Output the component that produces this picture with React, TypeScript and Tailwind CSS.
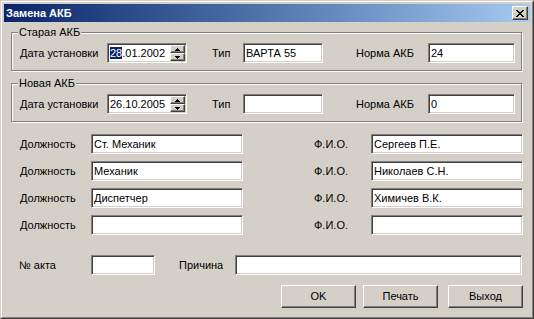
import type { ReactNode } from "react";

const sunken =
    "box-border flex h-[20px] items-center whitespace-nowrap border border-t-[#808080] border-l-[#808080] border-r-white border-b-white bg-white pl-[2px] shadow-[inset_1px_1px_0_#404040,inset_-1px_-1px_0_#d4d0c8]";

const raised =
    "box-border border border-t-white border-l-white border-r-[#404040] border-b-[#404040] bg-[#d4d0c8] shadow-[inset_-1px_-1px_0_#808080]";

type FieldProps = {
    width: string;
    children?: ReactNode;
};

const Field = ({ width, children }: FieldProps) => <div className={`${sunken} ${width}`}>{children}</div>;

const Label = ({ width, children }: FieldProps) => <div className={`${width} shrink-0 whitespace-nowrap`}>{children}</div>;

const Arrow = ({ up }: { up?: boolean }) => (
    <svg width="5" height="3" viewBox="0 0 5 3">
        <path d={up ? "M2 0h1v1h1v1h1v1H0V2h1V1h1z" : "M0 0h5v1H4v1H3v1H2V2H1V1H0z"} fill="#000" />
    </svg>
);

const DateField = ({ value, selected }: { value: string; selected?: boolean }) => (
    <div className={`${sunken} w-[80px] justify-between pr-[1px]`}>
        <span>
            {selected ? (
                <>
                    <span className="bg-[#0a246a] text-white">{value.slice(0, 2)}</span>
                    {value.slice(2)}
                </>
            ) : (
                value
            )}
        </span>
        <div className="flex h-[16px] w-[15px] flex-col">
            <div className={`${raised} flex h-[8px] items-center justify-center`}>
                <Arrow up />
            </div>
            <div className={`${raised} flex h-[8px] items-center justify-center`}>
                <Arrow />
            </div>
        </div>
    </div>
);

type GroupProps = {
    title: string;
    date: string;
    selected?: boolean;
    type: string;
    norm: string;
    className?: string;
};

const Group = ({ title, date, selected, type, norm, className }: GroupProps) => (
    <div
        className={`relative ml-[7px] box-border h-[39px] w-[511px] border border-[#808080] pl-[8px] pt-[10px] shadow-[inset_1px_1px_0_#fff,1px_1px_0_#fff] ${className ?? ""}`}
    >
        <span className="absolute left-[6px] top-[-7px] bg-[#d4d0c8] px-[1px] leading-[13px]">{title}</span>
        <div className="flex items-center">
            <Label width="w-[87px]">Дата установки</Label>
            <DateField value={date} selected={selected} />
            <div className="w-[25px]" />
            <Label width="w-[31px]">Тип</Label>
            <Field width="w-[80px]">{type}</Field>
            <div className="w-[33px]" />
            <Label width="w-[72px]">Норма АКБ</Label>
            <Field width="w-[87px]">{norm}</Field>
        </div>
    </div>
);

const people = [
    { post: "Ст. Механик", name: "Сергеев П.Е." },
    { post: "Механик", name: "Николаев С.Н." },
    { post: "Диспетчер", name: "Химичев В.К." },
    { post: "", name: "" },
];

const Button = ({ width, children }: FieldProps) => (
    <div className={`${raised} flex h-[23px] items-center justify-center ${width}`}>{children}</div>
);

export default function App() {
    return (
        <div
            className="box-border h-[319px] w-[534px] border border-t-[#d4d0c8] border-l-[#d4d0c8] border-r-[#404040] border-b-[#404040] bg-[#d4d0c8] text-[11px] text-black"
            style={{ fontFamily: '"Liberation Sans", Arial, sans-serif' }}
        >
            <div className="box-border flex h-full flex-col border border-t-white border-l-white border-r-[#808080] border-b-[#808080] p-[2px]">
                <div className="flex h-[18px] shrink-0 items-center justify-between bg-linear-to-r from-[#0a246a] to-[#a6caf0] pl-[2px] pr-[2px]">
                    <span className="font-bold text-white">Замена АКБ</span>
                    <div className={`${raised} flex h-[14px] w-[16px] items-center justify-center`}>
                        <svg width="8" height="7" viewBox="0 0 8 7">
                            <path
                                d="M0 0h2v1h1v1h2V1h1V0h2v1H7v1H6v1H5v1h1v1h1v1h1v1H6V6H5V5H3v1H2v1H0V6h1V5h1V4h1V3H2V2H1V1H0z"
                                fill="#000"
                            />
                        </svg>
                    </div>
                </div>

                <div className="flex flex-1 flex-col">
                    <Group title="Старая АКБ" date="28.01.2002" selected type="ВАРТА 55" norm="24" className="mt-[10px]" />
                    <Group title="Новая АКБ" date="26.10.2005" type="" norm="0" className="mt-[12px]" />

                    <div className="mt-[12px] flex flex-col gap-[7px] pl-[16px]">
                        {people.map((p, i) => (
                            <div key={i} className="flex items-center">
                                <Label width="w-[71px]">Должность</Label>
                                <Field width="w-[152px]">{p.post}</Field>
                                <div className="w-[71px]" />
                                <Label width="w-[57px]">Ф.И.О.</Label>
                                <Field width="w-[152px]">{p.name}</Field>
                            </div>
                        ))}
                    </div>

                    <div className="mt-[20px] flex items-center pl-[15px]">
                        <Label width="w-[72px]">№ акта</Label>
                        <Field width="w-[64px]" />
                        <div className="w-[24px]" />
                        <Label width="w-[56px]">Причина</Label>
                        <Field width="w-[287px]" />
                    </div>

                    <div className="mt-[10px] flex justify-end pr-[7px]">
                        <Button width="w-[75px]">OK</Button>
                        <div className="w-[7px]" />
                        <Button width="w-[75px]">Печать</Button>
                        <div className="w-[10px]" />
                        <Button width="w-[75px]">Выход</Button>
                    </div>
                </div>
            </div>
        </div>
    );
}
